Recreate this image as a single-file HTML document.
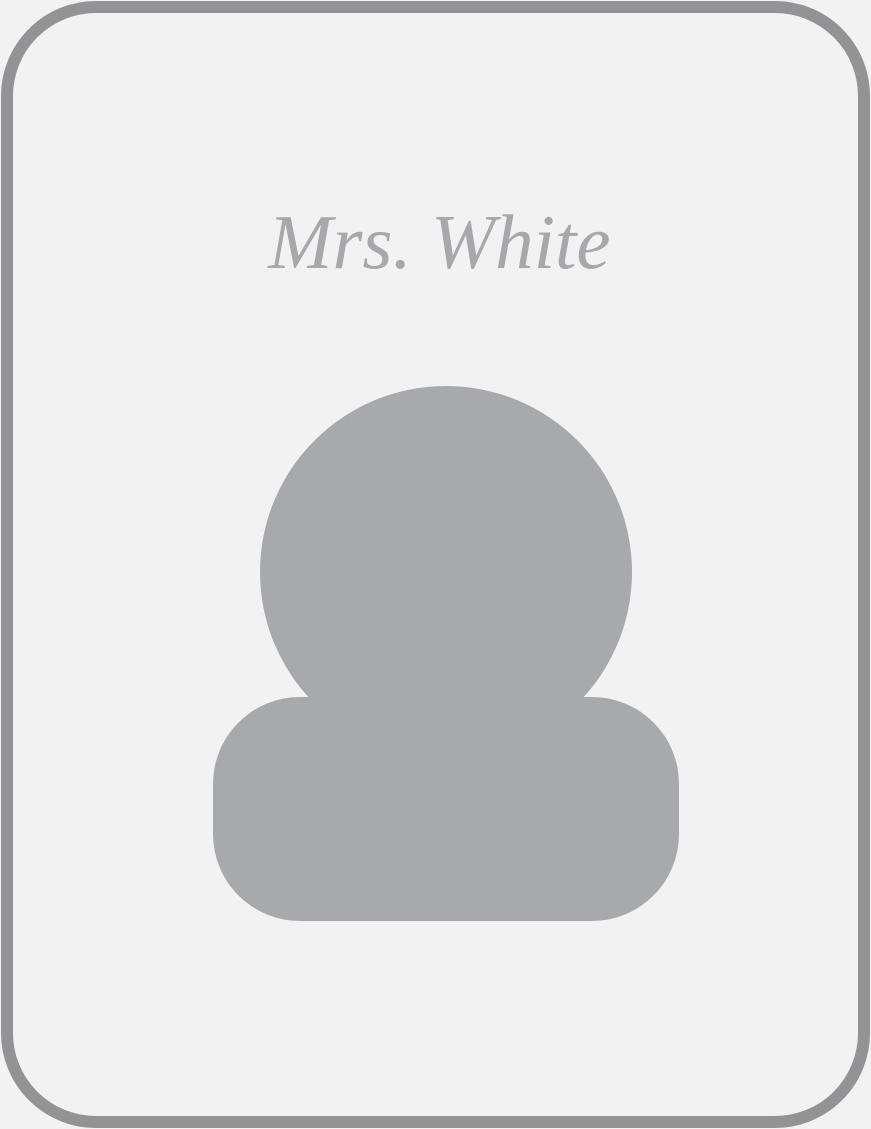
<!DOCTYPE html>
<html><head><style>
html,body{margin:0;padding:0;background:#f2f2f2;}
body{width:871px;height:1129px;position:relative;overflow:hidden;}
.card{position:absolute;left:1px;top:1px;width:845px;height:1103px;border:12px solid #939396;border-radius:95px;background:#f2f2f2;}
.name{position:absolute;left:0;width:871px;top:198px;text-align:center;font-family:"Liberation Serif",serif;font-style:italic;font-size:77px;color:#a7a8ab;letter-spacing:0px;padding-left:8px;box-sizing:border-box;}
</style></head><body>
<div class="card"></div>
<div class="name">Mrs. White</div>
<svg width="871" height="1129" style="position:absolute;left:0;top:0">
<circle cx="446" cy="572" r="186" fill="#a8a9ac"/>
<rect x="213" y="697" width="466" height="224" rx="87" fill="#a8a9ac"/>
</svg>
</body></html>
